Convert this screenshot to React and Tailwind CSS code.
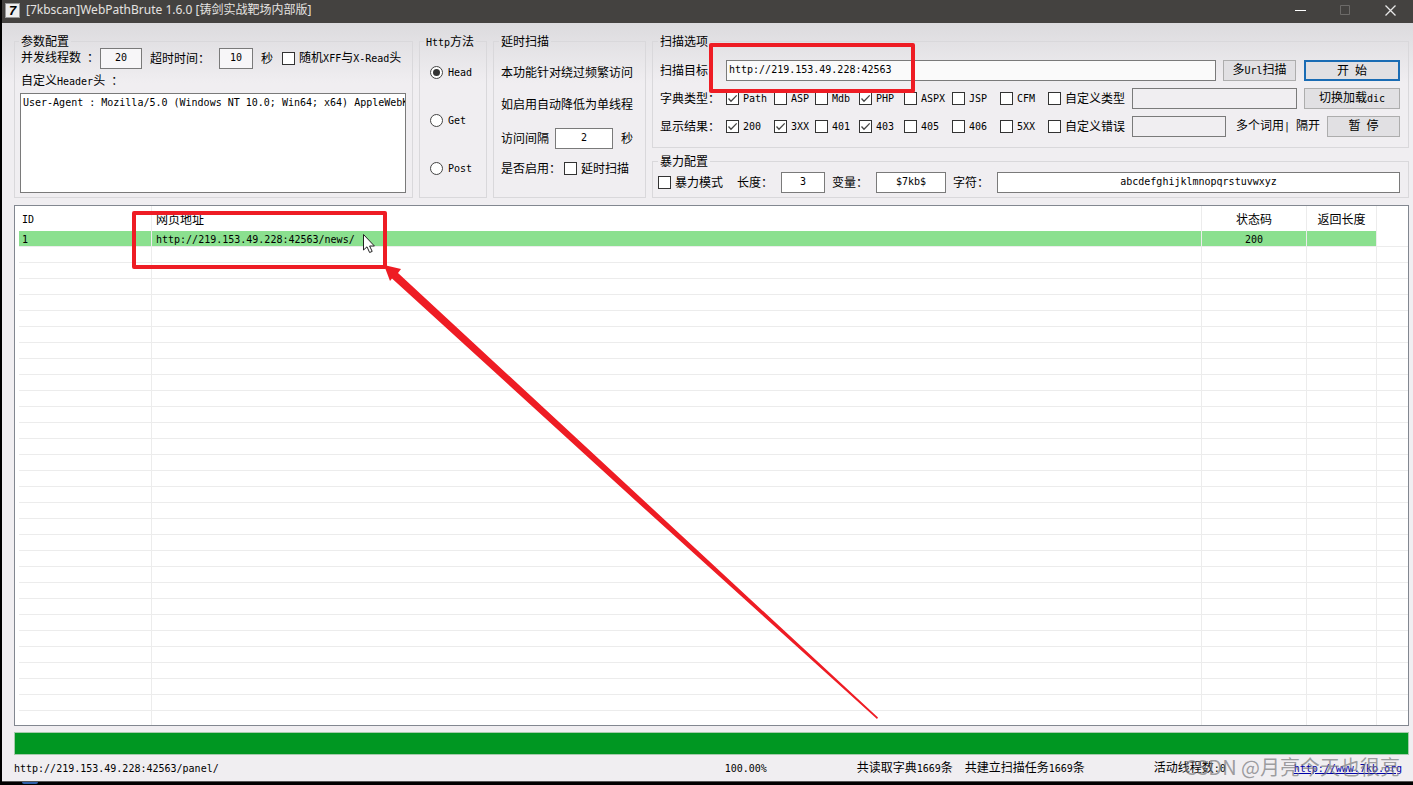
import React from 'react';
import clsx from 'clsx';

const DICTS = [
  { label: 'Path', on: true, width: 'w-[48px]' },
  { label: 'ASP', on: false, width: 'w-[41px]' },
  { label: 'Mdb', on: false, width: 'w-[44px]' },
  { label: 'PHP', on: true, width: 'w-[45px]' },
  { label: 'ASPX', on: false, width: 'w-[48px]' },
  { label: 'JSP', on: false, width: 'w-[48px]' },
  { label: 'CFM', on: false, width: 'w-[48px]' },
];

const CODES = [
  { label: '200', on: true, width: 'w-[48px]' },
  { label: '3XX', on: true, width: 'w-[41px]' },
  { label: '401', on: false, width: 'w-[44px]' },
  { label: '403', on: true, width: 'w-[45px]' },
  { label: '405', on: false, width: 'w-[48px]' },
  { label: '406', on: false, width: 'w-[48px]' },
  { label: '5XX', on: false, width: 'w-[48px]' },
];

const EMPTY_ROWS = 29;

// Latin runs are set in a 6px wide mono face, Chinese stays at 12px
const Mix = ({ children }) =>
  children.split(/([\x20-\x7e]+)/).map((part, i) =>
    i % 2 ? (
      <span key={i} className="font-['DejaVu_Sans_Mono',monospace] text-[10px] whitespace-pre">{part}</span>
    ) : part
  );

const Check = ({ label, on, className }) => (
  <label className={clsx('flex items-center gap-1 whitespace-nowrap shrink-0', className)}>
    <span className="grid shrink-0">
      <input type="checkbox" defaultChecked={on} className="peer col-start-1 row-start-1 appearance-none w-[13px] h-[13px] border border-[#333] bg-white" />
      <svg viewBox="0 0 13 13" className="col-start-1 row-start-1 w-[13px] h-[13px] invisible peer-checked:visible pointer-events-none" fill="none" stroke="#444" strokeWidth="1.3">
        <path d="M2.5 6.5 5 9.2 10.7 3.4" />
      </svg>
    </span>
    <span><Mix>{label}</Mix></span>
  </label>
);

const Radio = ({ label, on }) => (
  <label className="flex items-center gap-[5px] h-12">
    <span className="grid place-items-center shrink-0">
      <input type="radio" name="method" defaultChecked={on} className="peer col-start-1 row-start-1 appearance-none w-[13px] h-[13px] rounded-full border border-[#444] bg-white" />
      <span className="col-start-1 row-start-1 w-[7px] h-[7px] rounded-full bg-[#333] invisible peer-checked:visible pointer-events-none" />
    </span>
    <span><Mix>{label}</Mix></span>
  </label>
);

const Box = ({ className, ...props }) => (
  <input
    type="text"
    className={clsx("h-[21px] min-w-0 border border-[#7a7a7a] font-['DejaVu_Sans_Mono',monospace] text-[10px] px-0.5 pb-0.5", className)}
    {...props}
  />
);

const Btn = ({ children, className, primary }) => (
  <button
    type="button"
    className={clsx(
      'h-[21px] shrink-0 bg-[#e1e0e3] whitespace-pre leading-4',
      primary ? 'border-2 border-[#1a6cb4]' : 'border border-[#adadad]',
      className
    )}
  >
    <Mix>{children}</Mix>
  </button>
);

const Group = ({ title, className, children }) => (
  <fieldset className={clsx('min-w-0 border border-[#d9d8db]', className)}>
    <legend className="h-3 leading-3 px-0.5 -ml-0.5 whitespace-nowrap"><Mix>{title}</Mix></legend>
    {children}
  </fieldset>
);

function TitleBar() {
  return (
    <header className="flex items-center h-[23px] bg-[#444240] pl-[3px] text-[#e4e2e0]">
      <span className="w-[15px] h-[15px] mb-[3px] bg-[#eee] border border-[#999] text-black font-['Liberation_Sans',sans-serif] font-bold italic text-[13px] leading-[13px] text-center">7</span>
      <h1 className="ml-1.5 mb-[3px] flex-1 font-['Noto_Sans','Noto_Sans_CJK_SC',sans-serif] text-[12px] leading-4 whitespace-nowrap">
        [7kbscan]WebPathBrute 1.6.0 [铸剑实战靶场内部版]
      </h1>
      <div className="flex mb-[3px] mr-2">
        <button type="button" aria-label="Minimize" className="w-[46px] h-5 grid place-items-center">
          <svg width="11" height="11" stroke="#fff"><path d="M0 5.5h11" /></svg>
        </button>
        <button type="button" aria-label="Maximize" disabled className="w-[44px] h-5 grid place-items-center">
          <svg width="11" height="11" fill="none" stroke="#6c6a68"><path d="M.5.5h9v9h-9z" /></svg>
        </button>
        <button type="button" aria-label="Close" className="w-[30px] ml-2 h-5 grid place-items-center">
          <svg width="11" height="11" stroke="#e8e8e8" strokeWidth="1.3"><path d="M.5.5l10 10M10.5.5l-10 10" /></svg>
        </button>
      </div>
    </header>
  );
}

function Settings() {
  return (
    <div className="flex gap-1.5">
      <Group title="参数配置" className="w-[399px] shrink-0 pl-1.5 pr-1.5 pb-1">
        <div className="flex items-center h-[22px] whitespace-nowrap">
          <label htmlFor="threads"><Mix>并发线程数 ：</Mix></label>
          <Box id="threads" defaultValue="20" className="w-[42px] ml-px bg-[#f7f6f8] text-center" />
          <label htmlFor="timeout" className="ml-2">超时时间：</label>
          <Box id="timeout" defaultValue="10" className="w-[34px] ml-[9px] bg-[#f7f6f8] text-center" />
          <span className="ml-2 mr-[9px]">秒</span>
          <Check label="随机XFF与X-Read头" />
        </div>
        <label htmlFor="headers" className="block h-[22px] leading-[22px]"><Mix>自定义Header头 ：</Mix></label>
        <div className="-ml-px mt-0.5">
          <textarea
            id="headers"
            wrap="off"
            className="block w-full h-[100px] px-0.5 py-px resize-none overflow-hidden border border-[#7a7a7a] bg-white font-['DejaVu_Sans_Mono',monospace] text-[10px] leading-4"
            defaultValue="User-Agent : Mozilla/5.0 (Windows NT 10.0; Win64; x64) AppleWebKit/537.36"
          />
        </div>
      </Group>

      <Group title="Http方法" className="w-[68px] shrink-0 px-1.5">
        <div className="mt-px pl-1">
          <Radio label="Head" on />
          <Radio label="Get" />
          <Radio label="Post" />
        </div>
      </Group>

      <Group title="延时扫描" className="w-[153px] shrink-0 px-[7px]">
        <p className="mt-[9px] h-8 leading-8 whitespace-nowrap">本功能针对绕过频繁访问</p>
        <p className="h-8 leading-8 whitespace-nowrap">如启用自动降低为单线程</p>
        <div className="flex items-center h-9">
          <label htmlFor="interval">访问间隔</label>
          <Box id="interval" defaultValue="2" className="w-[58px] ml-1.5 mr-2 bg-white text-center" />
          <span>秒</span>
        </div>
        <div className="flex items-center h-6 gap-[3px] whitespace-nowrap">
          <span>是否启用：</span>
          <Check label="延时扫描" />
        </div>
      </Group>

      <div className="flex-1 min-w-0 flex flex-col gap-[7px]">
        <Group title="扫描选项" className="pl-[7px] pr-2 pb-[7px]">
          <div className="flex items-center h-7 mt-[9px]">
            <label htmlFor="target" className="w-[66px] shrink-0 whitespace-nowrap">扫描目标：</label>
            <Box id="target" defaultValue="http://219.153.49.228:42563" className="flex-1 bg-[#fafafa]" />
            <Btn className="w-[73px] ml-[7px]">多Url扫描</Btn>
            <Btn className="w-24 ml-2" primary>开 始</Btn>
          </div>
          <div className="flex items-center h-7">
            <span className="w-[66px] shrink-0 whitespace-nowrap">字典类型：</span>
            {DICTS.map((d) => <Check key={d.label} label={d.label} on={d.on} className={d.width} />)}
            <Check label="自定义类型" />
            <Box aria-label="自定义类型" className="flex-1 ml-[7px] bg-[#f0eef1]" />
            <Btn className="w-24 ml-[7px]">切换加载dic</Btn>
          </div>
          <div className="flex items-center h-7">
            <span className="w-[66px] shrink-0 whitespace-nowrap">显示结果：</span>
            {CODES.map((d) => <Check key={d.label} label={d.label} on={d.on} className={d.width} />)}
            <Check label="自定义错误" />
            <Box aria-label="自定义错误" className="flex-1 ml-[7px] bg-[#f0eef1]" />
            <span className="ml-2.5 whitespace-nowrap"><Mix>多个词用| 隔开</Mix></span>
            <Btn className="w-[73px] ml-[7px]">暂 停</Btn>
          </div>
        </Group>

        <Group title="暴力配置" className="pl-[7px] pr-2">
          <div className="flex items-center h-[30px] -ml-0.5 whitespace-nowrap">
            <Check label="暴力模式" />
            <label htmlFor="len" className="ml-3.5">长度：</label>
            <Box id="len" defaultValue="3" className="w-[44px] ml-2 bg-white text-center" />
            <label htmlFor="variable" className="ml-[7px]">变量：</label>
            <Box id="variable" defaultValue="$7kb$" className="w-[70px] ml-2 bg-white text-center" />
            <label htmlFor="chars" className="ml-[7px]">字符：</label>
            <Box id="chars" defaultValue="abcdefghijklmnopqrstuvwxyz" className="flex-1 ml-2 bg-white text-center" />
          </div>
        </Group>
      </div>
    </div>
  );
}

function Results() {
  const line = 'border-r border-[#ececec]';
  return (
    <div className="mt-[7px] border border-[#828790] bg-white pl-1">
      <table className="w-full table-fixed border-separate border-spacing-0">
        <colgroup>
          <col className="w-[133px]" />
          <col />
          <col className="w-[105px]" />
          <col className="w-[70px]" />
          <col className="w-[31px]" />
        </colgroup>
        <thead>
          <tr className="h-[25px] text-left leading-4">
            <th className={clsx(line, 'font-normal p-0 pl-[3px]')}><Mix>ID</Mix></th>
            <th className={clsx(line, 'font-normal p-0 pl-1')}>网页地址</th>
            <th className={clsx(line, 'font-normal p-0 text-center')}>状态码</th>
            <th className={clsx(line, 'font-normal p-0 text-center')}>返回长度</th>
            <th className="p-0" />
          </tr>
        </thead>
        <tbody className="leading-3 [&_td]:p-0 [&_td]:border-b [&_td]:border-[#ececec]">
          <tr className="h-4">
            <td className={clsx(line, 'bg-[#8be08f]')}><div className="pl-[3px]"><Mix>1</Mix></div></td>
            <td className={clsx(line, 'bg-[#8be08f]')}><div className="pl-1"><Mix>http://219.153.49.228:42563/news/</Mix></div></td>
            <td className={clsx(line, 'bg-[#8be08f] text-center')}><Mix>200</Mix></td>
            <td className={clsx(line, 'bg-[#8be08f]')} />
            <td />
          </tr>
          {Array.from({ length: EMPTY_ROWS }, (_, i) => (
            <tr key={i} className="h-4">
              <td className={line} /><td className={line} /><td className={line} /><td className={line} /><td />
            </tr>
          ))}
        </tbody>
        <tfoot>
          <tr className="h-[14px]">
            <td className={line} /><td className={line} /><td className={line} /><td className={line} /><td />
          </tr>
        </tfoot>
      </table>
    </div>
  );
}

function StatusBar() {
  return (
    <footer className="relative flex items-center h-[26px] pr-[7px] whitespace-nowrap">
      <span className="flex-1"><Mix>http://219.153.49.228:42563/panel/</Mix></span>
      <span className="w-[132px]"><Mix>100.00%</Mix></span>
      <span className="w-[108px]"><Mix>共读取字典1669条</Mix></span>
      <span className="w-[189px]"><Mix>共建立扫描任务1669条</Mix></span>
      <span className="w-[140px]"><Mix>活动线程数:0</Mix></span>
      <a href="#site" className="text-[#0000a8] underline"><Mix>http://www.7kb.org</Mix></a>
      <span className="absolute right-[9px] top-0 leading-6 text-[20px] text-[#77777a]/70 pointer-events-none">CSDN @月亮今天也很亮</span>
    </footer>
  );
}

// red boxes, arrow and mouse pointer drawn over the window
function Marks() {
  return (
    <svg width="900" height="760" className="absolute left-0 top-0 overflow-visible pointer-events-none">
      <g fill="none" stroke="#ee1c24" strokeWidth="4" strokeLinejoin="round">
        <rect x="711" y="45" width="202" height="46" />
        <rect x="134" y="213" width="251" height="54" />
      </g>
      <path fill="#ee1c24" d="M384 265 401 269 398 273 640 497 878 717.500 877 719 636 501 392 278.500 390 281z" />
      <path fill="#fff" stroke="#222" d="M363.5 234.500v15.500l3.500-3.200 2.600 5.700 2.600-1.100-2.600-5.400h4.800z" />
    </svg>
  );
}

export default function App() {
  return (
    <div className="relative min-h-screen overflow-hidden bg-black pl-0.5 text-black text-[12px] leading-4 font-['Noto_Sans_CJK_SC',sans-serif]">
      <TitleBar />
      <main className="bg-[#f0eef1] bg-linear-to-b from-[#dcdbde] to-[#f0eef1] to-[60px] border-b border-[#555] pt-3 pl-3 pr-1">
        <Settings />
        <Results />
        <div role="progressbar" aria-label="扫描进度" aria-valuenow={100} className="mt-1.5 h-[23px] border border-[#a5cbab] bg-[#009722]" />
        <StatusBar />
      </main>
      <div className="h-[3px] pl-5"><div className="w-4 h-0.5 rounded-b bg-[#2d5fa8]" /></div>
      <Marks />
    </div>
  );
}
